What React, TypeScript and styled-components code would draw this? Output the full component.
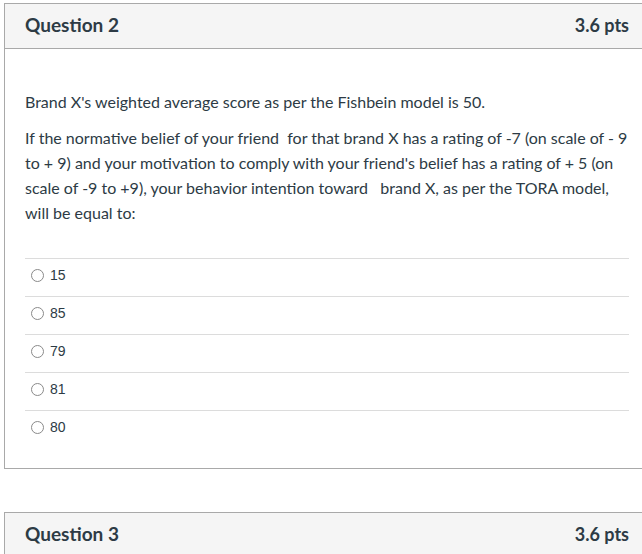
import React from "react";
import styled, { createGlobalStyle } from "styled-components";

const Global = createGlobalStyle`
  html, body {
    margin: 0;
    padding: 0;
    background: #fff;
    overflow: hidden;
  }
  body {
    font-family: Lato, "Liberation Sans", sans-serif;
    color: #2d3b45;
  }
`;

const Page = styled.div`
  padding: 3px 0 0 4px;
  width: 638px;
  overflow: hidden;
`;

const Card = styled.div`
  width: 644px;
  border: 1px solid #a9a9a9;
  background: #fff;
  & + & {
    margin-top: 43px;
  }
`;

const Header = styled.div`
  height: 41px;
  display: flex;
  align-items: center;
  justify-content: space-between;
  padding: 0 20px 3px 20px;
  background: #f5f5f5;
  border-bottom: 1px solid #a9a9a9;
`;

const Title = styled.h2`
  margin: 0;
  font-size: 19px;
  font-weight: 700;
  color: #2d3b45;
`;

const Points = styled.span`
  font-size: 18px;
  font-weight: 700;
  color: #2d3b45;
`;

const Body = styled.div`
  padding: 40px 20px 20px 20px;
`;

const Text = styled.p`
  margin: 0 0 11px 0;
  font-size: 16px;
  line-height: 25px;
  white-space: pre-wrap;
`;

const Answers = styled.div`
  margin-top: 33px;
`;

const Answer = styled.label`
  height: 29px;
  display: flex;
  align-items: flex-start;
  padding: 8px 0 0 6px;
  border-top: 1px solid #dcdcdc;
  font-family: "Liberation Sans", Arial, sans-serif;
  font-size: 14px;
  color: #2d3b45;
`;

const Choice = styled.span`
  height: 16px;
  display: flex;
  align-items: center;
  gap: 6px;
  line-height: 16px;
`;

const Radio = styled.span`
  width: 11px;
  height: 11px;
  border-radius: 50%;
  border: 1px solid #8a8a8a;
  background: #fff;
`;

const answers = ["15", "85", "79", "81", "80"];

const App = () => {
  return (
    <Page>
      <Global />
      <Card>
        <Header>
          <Title>Question 2</Title>
          <Points>3.6 pts</Points>
        </Header>
        <Body>
          <Text>Brand X's weighted average score as per the Fishbein model is 50.</Text>
          <Text>
            {"If the normative belief of your friend  for that brand X has a rating of -7 (on scale of - 9"}
            <br />
            {"to + 9) and your motivation to comply with your friend's belief has a rating of + 5 (on"}
            <br />
            {"scale of -9 to +9), your behavior intention toward   brand X, as per the TORA model,"}
            <br />
            {"will be equal to:"}
          </Text>
          <Answers>
            {answers.map((a) => (
              <Answer key={a}>
                <Choice>
                  <Radio />
                  {a}
                </Choice>
              </Answer>
            ))}
          </Answers>
        </Body>
      </Card>
      <Card>
        <Header>
          <Title>Question 3</Title>
          <Points>3.6 pts</Points>
        </Header>
      </Card>
    </Page>
  );
};

export default App;
